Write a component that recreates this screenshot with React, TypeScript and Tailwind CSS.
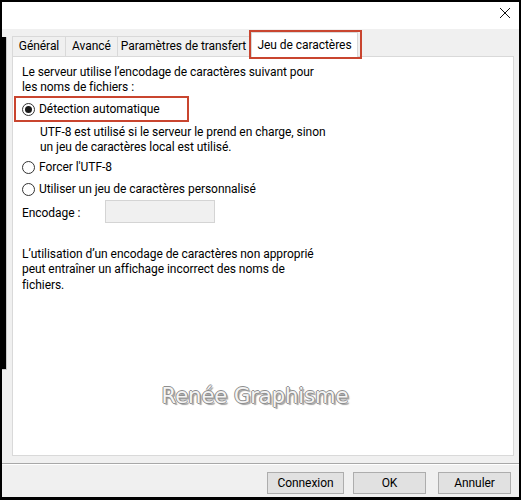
import React from "react";

function Radio({ checked }: { checked?: boolean }) {
  return (
    <span className="relative inline-flex h-[13px] w-[13px] shrink-0 items-center justify-center rounded-full border border-[#333333] bg-white">
      {checked && <span className="h-[7px] w-[7px] rounded-full bg-[#1a1a1a]" />}
    </span>
  );
}

export default function App() {
  const font = "font-['Roboto','Noto_Sans',sans-serif]";
  return (
    <div className={`w-[521px] h-[500px] bg-black pt-[2px] pl-[2px] pr-[2px] pb-[3px] ${font} text-[12px] leading-[15px] tracking-[-0.05px] text-black`}>
      <div className="flex h-full flex-col bg-[#f0f0f0]">
        {/* title bar */}
        <div className="flex h-[27px] shrink-0 items-start justify-end bg-white pr-[8px] pt-[5px]">
          <svg width="12" height="12" viewBox="0 0 12 12">
            <path d="M1 1 L11 11 M11 1 L1 11" stroke="#111" strokeWidth="1" />
          </svg>
        </div>
        <div className="flex h-[427px] shrink-0">
          {/* left dark edge */}
          <div className="flex w-[5px] flex-col pt-[8px]">
            <div className="h-[333px] w-[5px] border-b border-r border-[#c8c8c8] bg-black" />
          </div>
          <div className="flex flex-1 flex-col pl-[5px] pr-[5px]">
            {/* tabs */}
            <div className="flex h-[27px] items-end">
              <div className="flex h-[20px] w-[53px] items-center justify-center border-l border-t border-[#d9d9d9]">Général</div>
              <div className="flex h-[20px] w-[52px] items-center justify-center border-l border-t border-[#d9d9d9]">Avancé</div>
              <div className="flex h-[20px] w-[133px] items-center justify-center border-l border-r border-t border-[#d9d9d9]">Paramètres de transfert</div>
              <div className="relative -mb-px ml-[1px] flex h-[25px] w-[107px] items-center justify-center border-l border-r border-t border-[#d9d9d9] bg-white pt-[1px]">
                Jeu de caractères
                <div className="absolute left-[-3px] top-[-3px] h-[29px] w-[113px] border-2 border-[#c9452f]" />
              </div>
            </div>
            {/* panel */}
            <div className="flex h-[400px] flex-col border border-[#d9d9d9] bg-white pl-[9px] pt-[8px]">
              <div>Le serveur utilise l’encodage de caractères suivant pour</div>
              <div>les noms de fichiers :</div>
              <div className="relative mt-[4px] flex h-[20px] items-center gap-[4px]">
                <Radio checked />
                <span>Détection automatique</span>
                <div className="absolute left-[-8px] top-[-3px] h-[26px] w-[175px] border-2 border-[#c9452f]" />
              </div>
              <div className="mt-[6px] pl-[18px]">
                <div>UTF-8 est utilisé si le serveur le prend en charge, sinon</div>
                <div>un jeu de caractères local est utilisé.</div>
              </div>
              <div className="mt-[2px] flex h-[20px] items-center gap-[4px]">
                <Radio />
                <span>Forcer l'UTF-8</span>
              </div>
              <div className="mt-[2px] flex h-[20px] items-center gap-[4px]">
                <Radio />
                <span>Utiliser un jeu de caractères personnalisé</span>
              </div>
              <div className="mt-[1px] flex h-[23px] items-center">
                <span className="w-[83px] pt-[4px]">Encodage :</span>
                <div className="h-[23px] w-[110px] border border-[#d4d4d4] bg-[#f0f0f0]" />
              </div>
              <div className="mt-[24px]">
                <div>L’utilisation d’un encodage de caractères non approprié</div>
                <div>peut entraîner un affichage incorrect des noms de</div>
                <div className="mt-[1px]">fichiers.</div>
              </div>
              <div className="mt-[91px] flex justify-center pr-[25px]">
                <span className="font-['DejaVu_Sans',sans-serif] text-[21px] leading-[24px] tracking-[0px] text-[#f4f4f4] [text-shadow:-1px_0_0_#8f8f8f,1px_0_0_#8f8f8f,0_-1px_0_#8f8f8f,0_1px_0_#8f8f8f,2px_2px_1px_#a0a0a0]">
                  Renée Graphisme
                </span>
              </div>
            </div>
          </div>
        </div>
        {/* separator */}
        <div className="mt-[7px] h-px bg-[#a8a8a8]" />
        <div className="h-px bg-white" />
        <div className="flex justify-end gap-[8px] pr-[8px] pt-[7px]">
          <button className="h-[22px] w-[77px] border border-[#adadad] bg-[#e1e1e1]">Connexion</button>
          <button className="ml-[1px] h-[22px] w-[73px] border border-[#adadad] bg-[#e1e1e1]">OK</button>
          <button className="ml-[4px] h-[22px] w-[73px] border border-[#adadad] bg-[#e1e1e1]">Annuler</button>
        </div>
      </div>
    </div>
  );
}
